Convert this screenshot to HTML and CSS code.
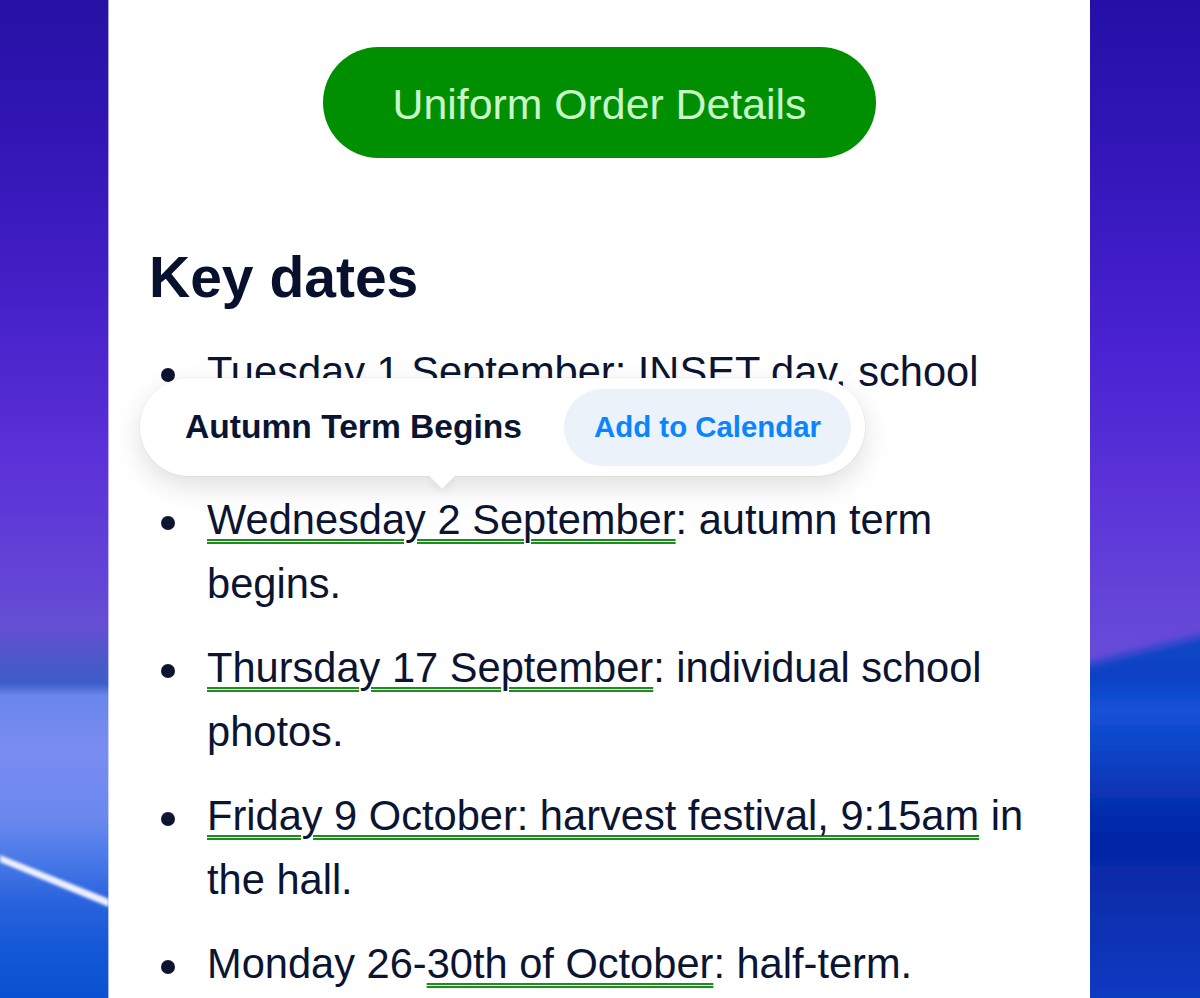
FILE: index.html
```html
<!DOCTYPE html>
<html lang="en">
<head>
<meta charset="utf-8">
<title>Key dates</title>
<link rel="stylesheet" href="styles.css">
</head>
<body>
<div class="screen">
  <aside class="side">
    <svg class="side-art" viewBox="0 0 109 998" preserveAspectRatio="none" aria-hidden="true">
      <defs>
        <linearGradient id="lgL" x1="0" y1="0" x2="0" y2="1">
          <stop offset="0" stop-color="#2612a4"/>
          <stop offset="0.1" stop-color="#2e14b0"/>
          <stop offset="0.3" stop-color="#4520c8"/>
          <stop offset="0.45" stop-color="#5a30d8"/>
          <stop offset="0.58" stop-color="#6444d6"/>
          <stop offset="0.63" stop-color="#6450d2"/>
          <stop offset="0.66" stop-color="#4c58c8"/>
          <stop offset="0.685" stop-color="#3e5ec8"/>
          <stop offset="0.697" stop-color="#6a86ea"/>
          <stop offset="0.75" stop-color="#7a8cf2"/>
          <stop offset="0.82" stop-color="#6a88ee"/>
          <stop offset="0.86" stop-color="#4a7ae8"/>
          <stop offset="0.9" stop-color="#2c64de"/>
          <stop offset="0.95" stop-color="#1458d6"/>
          <stop offset="1" stop-color="#0a52d2"/>
        </linearGradient>
        <filter id="softL" x="-20%" y="-20%" width="140%" height="140%"><feGaussianBlur stdDeviation="1.6"/></filter>
      </defs>
      <rect width="109" height="998" fill="url(#lgL)"/>
      <polygon points="0,855 109,899 109,907 0,862" fill="#eef0ff" filter="url(#softL)"/>
    </svg>
  </aside>

  <main class="panel">
    <a class="order-btn" href="#">Uniform Order Details</a>
    <h2 class="heading">Key dates</h2>
    <ul class="dates">
      <li><span class="item-text"><span class="det">Tuesday 1 September</span>: INSET day, school closed.</span></li>
      <li><span class="item-text"><span class="det">Wednesday 2 September</span>: autumn term begins.</span></li>
      <li><span class="item-text"><span class="det">Thursday 17 September</span>: individual school photos.</span></li>
      <li><span class="item-text"><span class="det">Friday 9 October: harvest festival, 9:15am</span> in the hall.</span></li>
      <li><span class="item-text">Monday 26-<span class="det">30th of October</span>: half-term.</span></li>
    </ul>

    <div class="callout">
      <span class="callout-title">Autumn Term Begins</span>
      <span class="callout-action">Add to Calendar</span>
    </div>
  </main>

  <aside class="side">
    <svg class="side-art" viewBox="0 0 110 998" preserveAspectRatio="none" aria-hidden="true">
      <defs>
        <linearGradient id="lgR" x1="0" y1="0" x2="0" y2="1">
          <stop offset="0" stop-color="#2410a6"/>
          <stop offset="0.15" stop-color="#3216b8"/>
          <stop offset="0.35" stop-color="#4a22d2"/>
          <stop offset="0.5" stop-color="#5c34d8"/>
          <stop offset="0.6" stop-color="#6444d8"/>
          <stop offset="0.7" stop-color="#6a52d8"/>
          <stop offset="1" stop-color="#6a52d8"/>
        </linearGradient>
        <linearGradient id="lgR2" x1="0" y1="0" x2="0" y2="1">
          <stop offset="0" stop-color="#0a46c6"/>
          <stop offset="0.12" stop-color="#0842c4"/>
          <stop offset="0.2" stop-color="#1652d8"/>
          <stop offset="0.28" stop-color="#0e48cc"/>
          <stop offset="0.45" stop-color="#0630b0"/>
          <stop offset="0.55" stop-color="#0626a6"/>
          <stop offset="0.75" stop-color="#0830b0"/>
          <stop offset="1" stop-color="#0a3cc4"/>
        </linearGradient>
        <filter id="softR" x="-20%" y="-10%" width="140%" height="120%"><feGaussianBlur stdDeviation="4"/></filter>
      </defs>
      <rect width="110" height="998" fill="url(#lgR)"/>
      <path d="M-10,666 Q55,650 120,634 L120,1010 L-10,1010 Z" fill="url(#lgR2)" filter="url(#softR)"/>
    </svg>
  </aside>
</div>
</body>
</html>
```
FILE: styles.css
```css
html, body {
  margin: 0;
  padding: 0;
  height: 100%;
  overflow: hidden;
}

body {
  font-family: "Liberation Sans", Arial, Helvetica, sans-serif;
  background: #4a28c8;
}

.screen {
  display: grid;
  grid-template-columns: 109px 981px 110px;
  height: 998px;
}

.side {
  position: relative;
  overflow: hidden;
}

.side-art {
  display: block;
  width: 100%;
  height: 100%;
}

.panel {
  position: relative;
  background: #ffffff;
  display: flex;
  flex-direction: column;
  padding: 47px 40px 0;
  overflow: hidden;
  box-shadow: -1px 0 0 rgba(255, 255, 255, 0.6), 1px 0 0 rgba(255, 255, 255, 0.4);
}

.order-btn {
  align-self: center;
  width: 553px;
  height: 111px;
  box-sizing: border-box;
  padding-top: 3px;
  border-radius: 56px;
  background: #008f00;
  color: #c8f7c8;
  font-size: 42.8px;
  display: flex;
  align-items: center;
  justify-content: center;
  text-decoration: none;
  flex: none;
}

.heading {
  margin: 85px 0 0;
  font-size: 57px;
  line-height: 68px;
  font-weight: 700;
  color: #07112e;
}

.dates {
  list-style: none;
  margin: 29px 0 0;
  padding: 0;
  color: #0b1532;
  font-size: 41.6px;
  line-height: 64px;
}

.dates li {
  display: grid;
  grid-template-columns: 58px 1fr;
  margin-bottom: 20px;
}

.dates li::before {
  content: "";
  width: 14px;
  height: 14px;
  border-radius: 50%;
  background: #0b1532;
  margin: 28px 0 0 12px;
}

.det {
  text-decoration-line: underline;
  text-decoration-style: double;
  text-decoration-color: #1f8c1f;
  text-decoration-thickness: 2px;
  text-underline-offset: 5px;
  text-decoration-skip-ink: auto;
}

.callout {
  position: absolute;
  left: 31px;
  top: 378px;
  height: 98px;
  box-sizing: border-box;
  display: flex;
  align-items: center;
  gap: 42px;
  padding: 0 14px 0 45px;
  background: #ffffff;
  border-radius: 49px;
  box-shadow: 0 10px 28px rgba(0, 0, 0, 0.13), 0 0 0 1px rgba(0, 0, 0, 0.03);
}

.callout::after {
  content: "";
  position: absolute;
  left: 293px;
  bottom: -9px;
  width: 18px;
  height: 18px;
  background: #ffffff;
  transform: rotate(45deg);
  box-shadow: 4px 4px 8px rgba(0, 0, 0, 0.06);
}

.callout-title {
  font-size: 33.6px;
  font-weight: 700;
  color: #0b1532;
  white-space: nowrap;
}

.callout-action {
  height: 77px;
  display: flex;
  align-items: center;
  padding: 0 30px;
  border-radius: 39px;
  background: #ebf2fa;
  color: #0a84ff;
  font-size: 29.4px;
  font-weight: 700;
  white-space: nowrap;
}
```
